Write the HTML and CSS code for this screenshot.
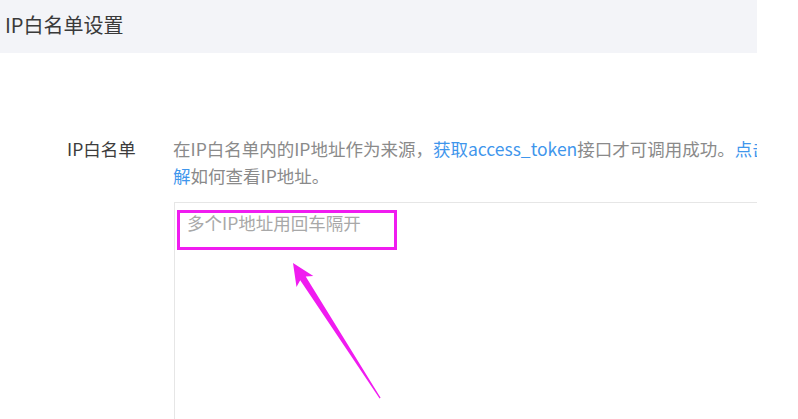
FILE: index.html
```html
<!DOCTYPE html>
<html lang="zh-CN">
<head>
    <meta charset="UTF-8">
    <meta name="viewport" content="width=device-width, initial-scale=1.0">
    <title>IP白名单设置</title>
    <link rel="stylesheet" href="styles.css">
</head>
<body>
    <div class="page">
        <div class="panel-title">IP白名单设置</div>

        <div class="form-row">
            <label class="form-label" for="ip-list">IP白名单</label>
            <div class="form-field">
                <p class="field-tip">在IP白名单内的IP地址作为来源，<a href="#">获取access_token</a>接口才可调用成功。<a href="#">点击了解</a>如何查看IP地址。</p>
                <textarea id="ip-list" class="ip-input" placeholder="多个IP地址用回车隔开"></textarea>
            </div>
        </div>

        <!-- annotation drawn over the screenshot -->
        <svg class="markup" width="798" height="419" viewBox="0 0 798 419">
            <rect x="178.5" y="211.5" width="217" height="37" fill="none" stroke="#f01cf0" stroke-width="3"/>
            <polygon fill="#f01cf0" points="293,263 313.3,276.1 305.7,276.6 380.6,397.8 379.6,398.4 300.2,280.2 296.5,286.9"/>
        </svg>
    </div>
</body>
</html>
```

FILE: styles.css
```css
:root {
    --title-bg: #f3f4f8;
    --text-color: #333333;
    --tip-color: #8a8a8a;
    --link-color: #3f96ec;
    --border-color: #e6e6e6;
}

body {
    margin: 0;
    background: #ffffff;
    font-family: "Noto Sans CJK SC", "Noto Sans", sans-serif;
    color: var(--text-color);
}

.page {
    position: relative;
    width: 757px;
    height: 419px;
    overflow: hidden;
}

.panel-title {
    height: 53px;
    line-height: 50px;
    padding-left: 5px;
    background-color: var(--title-bg);
    font-size: 20px;
    color: #3a3a3a;
}

.form-row {
    display: flex;
    margin-top: 82px;
}

.form-label {
    flex: 0 0 106px;
    padding-left: 67px;
    font-size: 17.5px;
    line-height: 27px;
    color: #3c3c3c;
}

.form-field {
    flex: 0 0 640px;
}

.field-tip {
    width: 622px;
    margin: 0;
    font-size: 17.5px;
    line-height: 27px;
    color: var(--tip-color);
}

.field-tip a {
    color: var(--link-color);
    text-decoration: none;
}

.ip-input {
    display: block;
    box-sizing: border-box;
    width: 640px;
    height: 260px;
    margin: 13px 0 0 1px;
    padding: 8px 12px;
    border: 1px solid var(--border-color);
    border-radius: 0;
    resize: none;
    font-family: inherit;
    font-size: 17.5px;
    line-height: 24px;
    outline: none;
}

.ip-input::placeholder {
    color: #a8a8a8;
}

.markup {
    position: absolute;
    left: 0;
    top: 0;
    pointer-events: none;
}
```
